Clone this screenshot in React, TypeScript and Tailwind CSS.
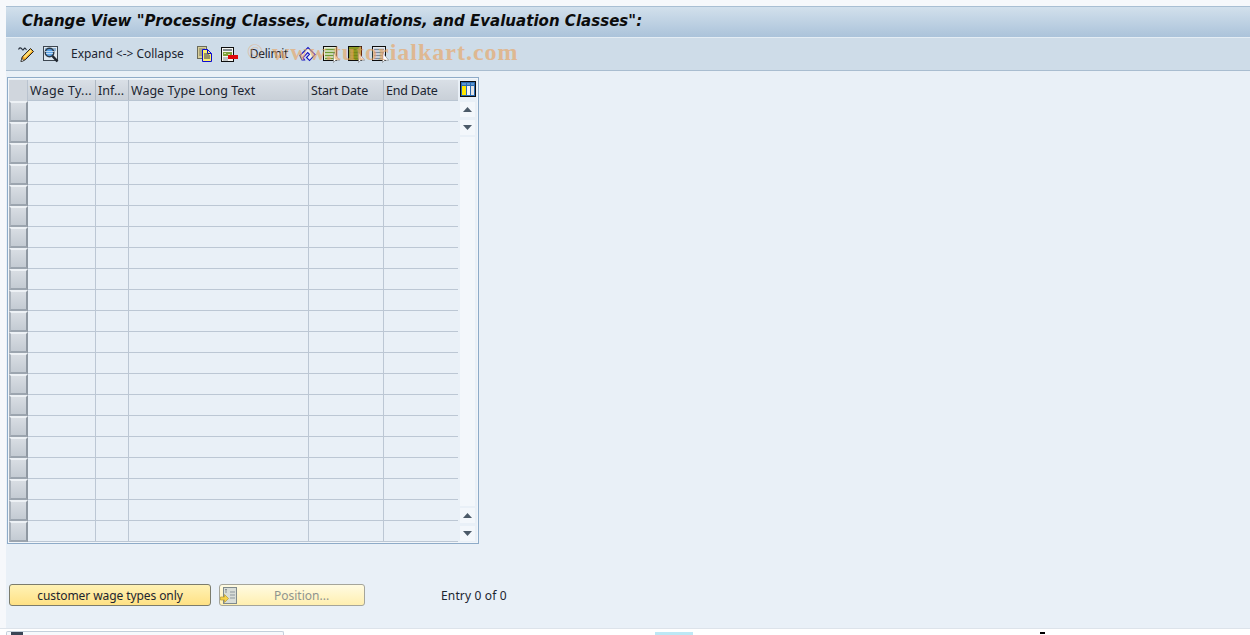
const rows = Array.from({ length: 21 });

const Pencil = () => (
  <svg width="17" height="17" viewBox="0 0 17 17" fill="none">
    <path d="M0.5 3.5c1-2 2-2 3-1s1 2 2 1 1-2 2-1l1 1.5" stroke="#2b3440" strokeWidth="1.1" />
    <path d="M3 15.5l1.2-4.5 8.3-8.5 3 3-8.3 8.3z" fill="#f0a624" stroke="#1f1f1f" strokeWidth="1" />
    <path d="M5.5 10.5l7-7 1.5 1.5-7 7z" fill="#ffe27a" />
    <path d="M3 15.5l0.8-3 2.2 2.2z" fill="#fff" stroke="#1f1f1f" strokeWidth="0.6" />
  </svg>
);

const Glasses = () => (
  <svg width="17" height="17" viewBox="0 0 17 17" fill="none">
    <rect x="1.5" y="0.5" width="14" height="14" fill="#dfe8ef" stroke="#3c4650" />
    <rect x="3" y="2" width="11" height="3" fill="#8fb5d8" />
    <circle cx="7.5" cy="6.5" r="4.2" fill="#4a9ae6" fillOpacity="0.85" stroke="#2c3a48" strokeWidth="1.6" />
    <path d="M3 5.5h9M4 7.5h7" stroke="#d5e8f8" strokeWidth="0.8" />
    <path d="M10.5 10l5 5.5" stroke="#1f2730" strokeWidth="2.6" />
  </svg>
);

const Copy = () => (
  <svg width="16" height="16" viewBox="0 0 16 16" fill="none">
    <rect x="0.5" y="0.5" width="9" height="12" fill="#d8cf9a" stroke="#6b6b5a" />
    <path d="M2 3h6M2 5h3M2 7h3M2 9h3" stroke="#7a7a62" />
    <path d="M5.5 3.5h5l4 4v8h-9z" fill="#ffee70" stroke="#0b0bd0" />
    <path d="M10.5 3.5v4h4" stroke="#0b0bd0" />
    <path d="M7 8h5M7 10h6M7 12h6" stroke="#33335a" />
  </svg>
);

const DeleteRow = () => (
  <svg width="17" height="15" viewBox="0 0 17 15" fill="none">
    <rect x="0.5" y="0.5" width="12" height="14" fill="#f7f7f2" stroke="#0d0d0d" />
    <path d="M2 3h9" stroke="#5e6a72" strokeWidth="1.5" />
    <rect x="2" y="5" width="9" height="4" fill="#7fa23c" />
    <path d="M3 6.5h2M7 7.5h2" stroke="#d5e2a8" />
    <path d="M2 11h5M2 13h5" stroke="#8a8f92" />
    <rect x="7" y="8" width="10" height="4" fill="#e00a0a" />
  </svg>
);

const Eraser = () => (
  <svg width="17" height="16" viewBox="0 0 17 16" fill="none">
    <path d="M1 9.5L9 1.5l7 7-5.5 6-3-3 3-3.2-1.8-1.8L4 11.5 5.5 14H3z" fill="#f4f6fa" fillOpacity="0.8" stroke="#1414c0" strokeWidth="1.1" />
  </svg>
);

const RowSelect = ({ fill, line }: { fill: string; line: string }) => (
  <svg width="17" height="17" viewBox="0 0 17 17" fill="none">
    <rect x="0.5" y="0.5" width="13" height="14" fill={fill} stroke="#0d0d0d" />
    <path d="M2 3.5h10M2 6.5h10M2 9.5h10M2 12.5h10" stroke={line} strokeWidth="1.4" />
    <path d="M10.5 6.5v10l2.2-2.2h4z" fill="#fff" stroke="#6a6a6a" strokeWidth="0.5" />
  </svg>
);

const ColumnSettings = () => (
  <svg width="16" height="16" viewBox="0 0 16 16" fill="none">
    <rect x="0.5" y="0.5" width="15" height="15" fill="#2a6ab0" stroke="#0d0d0d" />
    <rect x="2" y="5" width="4" height="9" fill="#ffe800" />
    <rect x="7" y="5" width="3" height="9" fill="#f5f5f5" />
    <rect x="11" y="5" width="3" height="9" fill="#e4e4e4" />
    <path d="M2 3h4M7 3h3M11 3h3" stroke="#8cc0ee" />
  </svg>
);

const PositionIcon = () => (
  <svg width="17" height="17" viewBox="0 0 17 17" fill="none">
    <rect x="3.5" y="0.5" width="13" height="16" fill="#d8ddd8" stroke="#7f8a8c" />
    <path d="M10 5h5M10 8h5M10 11h5" stroke="#8d979c" />
    <path d="M6 2v4M5 3l1-1 1 1" stroke="#8a9296" />
    <path d="M0.5 10h4V7.5l4 4-4 4V13h-4z" fill="#f6d24a" stroke="#b49a30" strokeWidth="0.7" />
  </svg>
);

const Arrow = ({ up }: { up?: boolean }) => (
  <div className="w-[15px] h-[15px] bg-[#f3f7fb] flex items-center justify-center">
    <svg width="9" height="5" viewBox="0 0 9 5">
      <path d={up ? "M4.5 0L9 5H0z" : "M0 0h9L4.5 5z"} fill="#4c5a68" />
    </svg>
  </div>
);

const App = () => {
  return (
    <div className="relative w-[1250px] h-[635px] overflow-hidden bg-white font-['Noto_Sans',sans-serif] text-[12px] text-[#1c2530]">
      <div className="flex flex-col h-[628px] pt-[6px] pl-[6px] bg-[#f6f8fb]">
        <div className="h-[31px] shrink-0 flex items-center pl-[16px] pb-[2px] bg-gradient-to-b from-[#d2e0ec] to-[#abc3da] border-t border-[#a9bfd3]">
          <span className="font-['DejaVu_Sans',sans-serif] font-bold italic text-[15px] tracking-[0.03px] text-[#0c0c0c] leading-none">
            Change View "Processing Classes, Cumulations, and Evaluation Classes":
          </span>
        </div>
        <div className="h-[34px] shrink-0 flex items-center pl-[12px] bg-[#cedce8] border-t border-[#e4edf4] border-b border-b-[#a9bdd0]">
          <Pencil />
          <span className="ml-[7px] flex"><Glasses /></span>
          <span className="ml-[12px] whitespace-nowrap tracking-[-0.03px]">Expand &lt;-&gt; Collapse</span>
          <span className="ml-[13px] flex"><Copy /></span>
          <span className="ml-[8px] flex"><DeleteRow /></span>
          <span className="ml-[12px] w-[37px] tracking-[-0.3px]">Delimit</span>
          <span className="ml-[12px] flex"><Eraser /></span>
          <span className="ml-[7px] flex"><RowSelect fill="#e6ecd8" line="#6f9a34" /></span>
          <span className="ml-[8px] flex"><RowSelect fill="#8f9c25" line="#77851a" /></span>
          <span className="ml-[7px] flex"><RowSelect fill="#e4e9ee" line="#7a8c9e" /></span>
        </div>
        <div className="flex-1 bg-[#e9f0f7] pt-[6px] pl-[1px] flex flex-col">
          <div className="w-[472px] h-[467px] shrink-0 border border-[#8eabc8] shadow-[inset_0_0_0_1px_#f2f6fa] pt-[2px] pl-[1px] flex">
            <div className="w-[19px] shrink-0 flex flex-col">
              <div className="h-[21px] bg-[#d0d6dd] border-r border-[#b9c3cf]" />
              {rows.map((_, i) => (
                <div key={i} className="h-[21px] shrink-0 bg-gradient-to-b from-[#d8dde3] to-[#c4cbd3] border-2 border-t-[#edf1f5] border-l-[#aab2bb] border-r-[#8f98a2] border-b-[#9ca5af]" />
              ))}
            </div>
            <div className="w-[430px] shrink-0 flex flex-col">
              <div className="h-[21px] shrink-0 flex bg-gradient-to-b from-[#d9dfe6] to-[#c9d0d8] border-b border-[#b9c5d2] text-[12.5px] leading-[22px] whitespace-nowrap">
                <div className="w-[68px] pl-[2px] border-r border-[#aeb8c3] tracking-[0.3px]">Wage Ty...</div>
                <div className="w-[33px] pl-[2px] border-r border-[#aeb8c3]">Inf...</div>
                <div className="w-[180px] pl-[2px] border-r border-[#aeb8c3]">Wage Type Long Text</div>
                <div className="w-[75px] pl-[2px] border-r border-[#aeb8c3] tracking-[-0.2px]">Start Date</div>
                <div className="w-[74px] pl-[2px] tracking-[-0.2px]">End Date</div>
              </div>
              {rows.map((_, i) => (
                <div key={i} className="h-[21px] shrink-0 flex border-b border-[#bcc7d4]">
                  <div className="w-[68px] border-r border-[#bcc7d4]" />
                  <div className="w-[33px] border-r border-[#bcc7d4]" />
                  <div className="w-[180px] border-r border-[#bcc7d4]" />
                  <div className="w-[75px] border-r border-[#bcc7d4]" />
                  <div className="w-[74px]" />
                </div>
              ))}
            </div>
            <div className="ml-[2px] w-[16px] shrink-0 flex flex-col">
              <div className="h-[21px] pt-[1px] flex"><ColumnSettings /></div>
              <div className="mt-[1px]"><Arrow up /></div>
              <div className="mt-[3px]"><Arrow /></div>
              <div className="mt-[2px] w-[15px] flex-1 bg-[#f3f7fb]" />
              <div className="mt-[2px]"><Arrow up /></div>
              <div className="mt-[3px] mb-[2px]"><Arrow /></div>
            </div>
          </div>
          <div className="mt-[40px] flex items-center pl-[2px]">
            <div className="w-[202px] h-[22px] pt-[1px] rounded-[3px] border border-[#7c7c6c] bg-gradient-to-b from-[#fff2b5] to-[#ffe184] flex items-center justify-center whitespace-nowrap tracking-[-0.08px]">
              customer wage types only
            </div>
            <div className="ml-[8px] w-[146px] h-[22px] rounded-[3px] border border-[#a5a59a] bg-gradient-to-b from-[#fffbe2] to-[#ffefb0] flex items-center text-[#8f948f]">
              <PositionIcon />
              <span className="ml-[37px] pt-[1px]">Position...</span>
            </div>
            <span className="ml-[76px] pt-[1px] whitespace-nowrap tracking-[0.15px]">Entry 0 of 0</span>
          </div>
        </div>
      </div>
      <div className="h-[7px] bg-white border-t border-[#dde3ea] relative">
        <div className="absolute left-[6px] top-[2px] w-[278px] h-[6px] border border-b-0 border-[#c3cfdb] rounded-t-[2px] bg-[#f6f9fc]">
          <div className="absolute left-[4px] top-0 w-[12px] h-[4px] bg-[#3a4656]" />
        </div>
        <div className="absolute left-[655px] top-[3px] w-[38px] h-[3px] bg-[#bde8f5]" />
        <div className="absolute left-[1040px] top-[3px] w-[5px] h-[2px] bg-black" />
      </div>
      <div className="absolute left-[247px] top-[40px] flex items-center gap-[9px] pointer-events-none font-['Liberation_Serif',serif] text-[#e8a565] whitespace-nowrap leading-none">
        <span className="text-[21px] opacity-50">©</span>
        <span className="font-bold text-[24px] tracking-[1px] opacity-65">www.tutorialkart.com</span>
      </div>
    </div>
  );
};

export default App;
